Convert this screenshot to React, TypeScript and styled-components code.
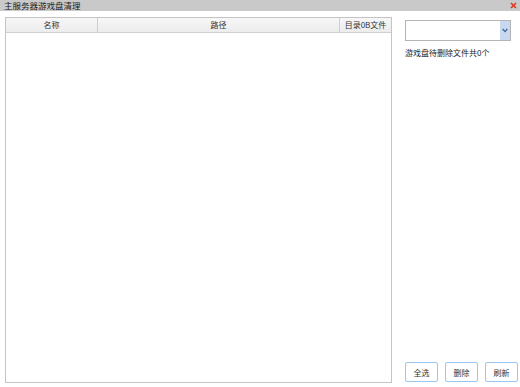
import React from "react";
import styled, { createGlobalStyle } from "styled-components";

const Global = createGlobalStyle`
  html, body { margin: 0; padding: 0; background: #ffffff; }
  body { font-family: "Noto Sans CJK SC", "Noto Sans", sans-serif; color: #222; }
`;

const Window = styled.div`
  width: 520px;
  height: 387px;
  display: flex;
  flex-direction: column;
  background: #ffffff;
  overflow: hidden;
`;

const TitleBar = styled.div`
  height: 11px;
  flex: none;
  background: #c9c9c9;
  display: flex;
  align-items: center;
  justify-content: space-between;
  padding: 0 2px 0 4px;
`;

const Title = styled.span`
  font-size: 8.5px;
  line-height: 10px;
  color: #1a1a1a;
  margin-top: -1px;
`;

const CloseBtn = styled.svg`
  width: 7px;
  height: 7px;
  margin-right: 1px;
`;

const Body = styled.div`
  flex: 1;
  display: flex;
  padding: 6px 2px 4px 5px;
  min-height: 0;
`;

const Grid = styled.div`
  width: 387px;
  flex: none;
  border: 1px solid #c4c4c4;
  box-sizing: border-box;
  display: flex;
  flex-direction: column;
  background: #fff;
`;

const HeaderRow = styled.div`
  display: grid;
  grid-template-columns: 92px 242px 1fr;
  height: 15px;
  box-sizing: border-box;
  border-bottom: 1px solid #d0d0d0;
  background: linear-gradient(#f7f7f7, #ececec);
`;

const HeaderCell = styled.div<{ $last?: boolean }>`
  font-size: 8px;
  line-height: 14px;
  text-align: center;
  color: #333;
  border-right: ${(p) => (p.$last ? "none" : "1px solid #cfcfcf")};
  white-space: nowrap;
  overflow: hidden;
`;

const Side = styled.div`
  flex: 1;
  display: flex;
  flex-direction: column;
  margin-left: 13px;
  padding-top: 3px;
`;

const Select = styled.div`
  width: 106px;
  height: 21px;
  box-sizing: border-box;
  border: 1px solid #b4b4b4;
  display: flex;
  justify-content: flex-end;
  background: #fff;
`;

const SelectArrow = styled.div`
  width: 10px;
  background: #c7d8ef;
  display: flex;
  align-items: center;
  justify-content: center;
`;

const Label = styled.div`
  margin-top: 7px;
  font-size: 8px;
  line-height: 10px;
  color: #222;
  white-space: nowrap;
`;

const Buttons = styled.div`
  margin-top: auto;
  display: flex;
  gap: 6px;
  padding-bottom: 1px;
`;

const Button = styled.button`
  width: 33px;
  height: 20px;
  box-sizing: border-box;
  border: 1px solid #9cc6f2;
  border-radius: 2px;
  background: #ffffff;
  font-family: "Noto Sans CJK SC", sans-serif;
  font-size: 8px;
  color: #333;
  padding: 0;
  & + & { margin-left: 1px; }
`;

export default function App() {
  return (
    <Window>
      <Global />
      <TitleBar>
        <Title>主服务器游戏盘清理</Title>
        <CloseBtn viewBox="0 0 7 7">
          <path d="M1 1 L6 6 M6 1 L1 6" stroke="#e0341f" strokeWidth="1.6" />
        </CloseBtn>
      </TitleBar>
      <Body>
        <Grid>
          <HeaderRow>
            <HeaderCell>名称</HeaderCell>
            <HeaderCell>路径</HeaderCell>
            <HeaderCell $last>目录0B文件</HeaderCell>
          </HeaderRow>
        </Grid>
        <Side>
          <Select>
            <SelectArrow>
              <svg width="6" height="5" viewBox="0 0 6 5">
                <path d="M0.7 1 L3 3.6 L5.3 1" stroke="#3a5f96" strokeWidth="1.2" fill="none" />
              </svg>
            </SelectArrow>
          </Select>
          <Label>游戏盘待删除文件共0个</Label>
          <Buttons>
            <Button>全选</Button>
            <Button>删除</Button>
            <Button>刷新</Button>
          </Buttons>
        </Side>
      </Body>
    </Window>
  );
}
